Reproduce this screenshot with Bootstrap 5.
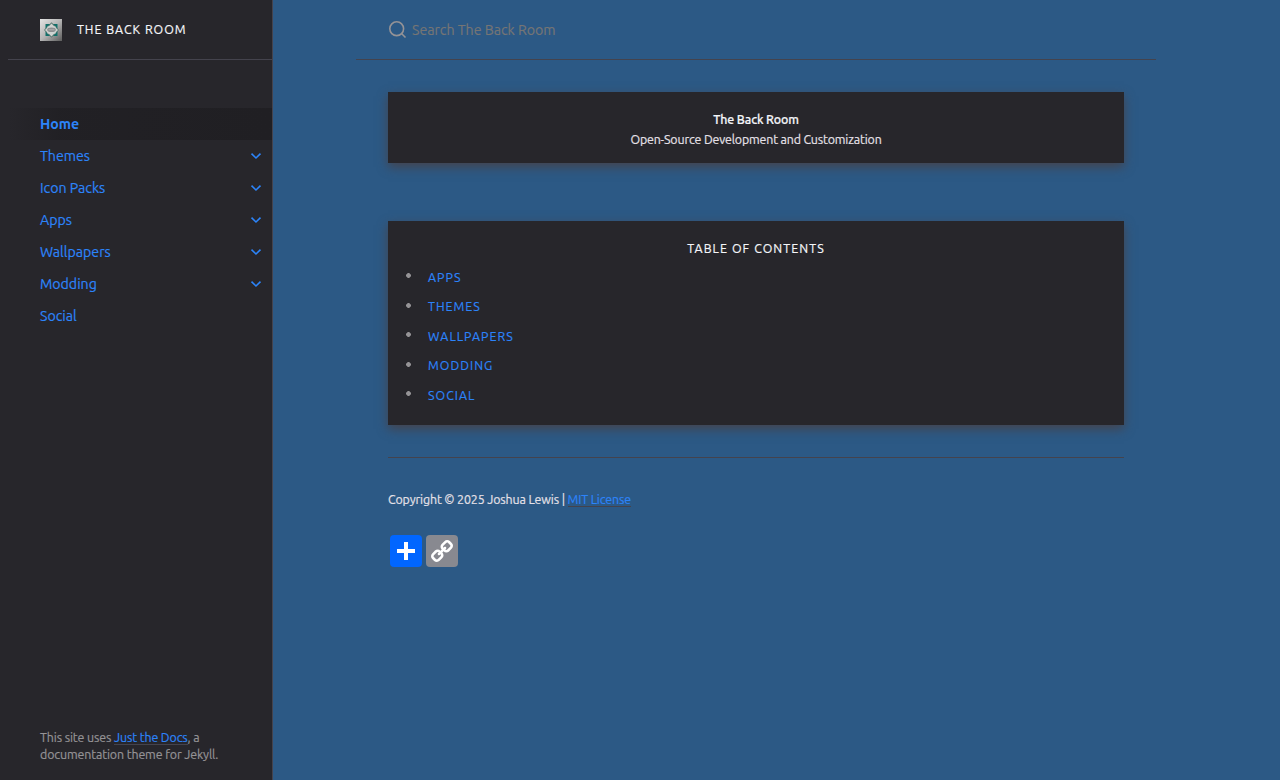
<!DOCTYPE html>
<html lang="en">
<head>
<meta charset="utf-8">
<meta name="viewport" content="width=device-width, initial-scale=1">
<title>The Back Room</title>
<link href="https://cdn.jsdelivr.net/npm/bootstrap@5.3.0/dist/css/bootstrap.min.css" rel="stylesheet">
<style>
  body { background: #2c5985; color: #e6e1e8; font: 12.4px/17px Ubuntu, "Noto Sans", sans-serif; letter-spacing: -.13px; -webkit-text-stroke: .18px; }
  a { color: #2c84fa; text-decoration: none; }
  .side-bar { width: 273px; padding-left: 8px; background: #27262b; border-right: 1px solid #44434d; }
  .site-header, .search-bar { height: 60px; border-bottom: 1px solid #44434d; padding-left: 32px; }
  .site-title { color: #f5f6fa; letter-spacing: .98px; margin-left: 15px; }
  .side-nav { padding-top: 48px; font-size: 14.2px; line-height: 32px; letter-spacing: -.02px; }
  .side-nav a { height: 32px; padding: 0 10px 0 32px; }
  .side-nav a.current { font-weight: 600; -webkit-text-stroke: 0; background: linear-gradient(-90deg, #201f23 0%, rgba(32,31,35,.8) 80%, rgba(32,31,35,0) 100%); }
  .side-foot { padding: 0 32px 17px; color: #959396; letter-spacing: -.11px; }
  .ruled { border-bottom: 1px solid #44434d; }
  .main-col { width: 800px; margin-left: 83px; }
  .search-label { font-size: 14.2px; letter-spacing: -.02px; line-height: 20px; color: #757575; margin-left: 5px; }
  .panel { background: #27262b; box-shadow: 0 4px 10px #44434d; }
  .intro { height: 71px; padding-top: 17px; line-height: 20px; }
  .intro strong { font-weight: 500; color: #f5f6fa; }
  .tagline { letter-spacing: -.15px; }
  .toc { margin-top: 58px; height: 204px; padding-top: 19px; }
  .toc-title { color: #f5f6fa; letter-spacing: 1.08px; line-height: 17px; }
  .toc ul { margin-top: 5.6px; letter-spacing: 1.03px; }
  .toc li { height: 29.5px; line-height: 29px; }
  .dot { width: 5px; height: 5px; background: radial-gradient(circle, #959396 2px, transparent 2.7px); margin: 0 17px 3.4px 18px; }
  .main-foot { margin-top: 32px; border-top: 1px solid #44434d; padding-top: 33px; }
  .share { padding: 27px 0 0 2px; gap: 4px; }
</style>
</head>
<body>
<div class="d-flex vh-100 overflow-hidden">
  <aside class="side-bar d-flex flex-column flex-shrink-0">
    <header class="site-header d-flex align-items-center flex-shrink-0">
      <svg width="22" height="22" viewBox="0 0 22 22" aria-hidden="true">
        <defs><linearGradient id="plate" x1="0" y1="0" x2="1" y2="1"><stop offset="0" stop-color="#e4e4e4"/><stop offset=".5" stop-color="#b5b5b5"/><stop offset="1" stop-color="#5c5c5c"/></linearGradient></defs>
        <rect width="22" height="22" fill="url(#plate)"/>
        <path d="M5.500 5h12v12h-12z" fill="#12706b"/>
        <path d="M11.500 3.200L19 11l-7.500 7.800L4 11z" fill="#5c7a72"/>
        <path d="M11.500 4.500l2.300 2.500 1.700.500.500 1.500 2 2-2 2-.500 1.500-1.700.500-2.300 2.500-2.300-2.500-1.700-.500-.500-1.500-2-2 2-2 .500-1.500 1.700-.500z" fill="#d0d3d1"/>
        <ellipse cx="11.500" cy="10.800" rx="4.300" ry="2.300" fill="#8c8e90"/><path d="M8.500 10.800h6" stroke="#b9b9b9" stroke-width=".8"/>
      </svg>
      <span class="site-title">THE BACK ROOM</span>
    </header>
    <nav class="side-nav flex-grow-1">
      <a href="#" class="current d-flex"><span>Home</span></a>
      <a href="#" class="d-flex align-items-center justify-content-between"><span>Themes</span><svg class="chev" width="12" height="8" viewBox="0 0 12 8"><path d="M1.500 1.700L6 6l4.500-4.300" fill="none" stroke="#2c84fa" stroke-width="1.600"/></svg></a>
      <a href="#" class="d-flex align-items-center justify-content-between"><span>Icon Packs</span><svg class="chev" width="12" height="8" viewBox="0 0 12 8"><path d="M1.500 1.700L6 6l4.500-4.300" fill="none" stroke="#2c84fa" stroke-width="1.600"/></svg></a>
      <a href="#" class="d-flex align-items-center justify-content-between"><span>Apps</span><svg class="chev" width="12" height="8" viewBox="0 0 12 8"><path d="M1.500 1.700L6 6l4.500-4.300" fill="none" stroke="#2c84fa" stroke-width="1.600"/></svg></a>
      <a href="#" class="d-flex align-items-center justify-content-between"><span>Wallpapers</span><svg class="chev" width="12" height="8" viewBox="0 0 12 8"><path d="M1.500 1.700L6 6l4.500-4.300" fill="none" stroke="#2c84fa" stroke-width="1.600"/></svg></a>
      <a href="#" class="d-flex align-items-center justify-content-between"><span>Modding</span><svg class="chev" width="12" height="8" viewBox="0 0 12 8"><path d="M1.500 1.700L6 6l4.500-4.300" fill="none" stroke="#2c84fa" stroke-width="1.600"/></svg></a>
      <a href="#" class="d-flex"><span>Social</span></a>
    </nav>
    <footer class="side-foot text-nowrap">This site uses <a href="#" class="ruled">Just the Docs</a>, a<br>documentation theme for Jekyll.</footer>
  </aside>
  <div class="main-col">
    <div class="search-bar d-flex align-items-center">
      <svg width="19" height="19" viewBox="0 0 19 19" fill="none" stroke="#959396" stroke-width="1.600"><circle cx="8.700" cy="8.700" r="6.900"/><path d="M13.500 13.500l4 4"/></svg>
      <span class="search-label">Search The Back Room</span>
    </div>
    <main class="px-4 mx-2 pt-4 mt-2">
      <section class="panel intro text-center"><strong class="d-block">The Back Room</strong><span class="tagline">Open-Source Development and Customization</span></section>
      <section class="panel toc">
        <div class="toc-title text-center">TABLE OF CONTENTS</div>
        <ul class="list-unstyled mb-0">
          <li class="d-flex align-items-center"><i class="dot"></i><a href="#">APPS</a></li>
          <li class="d-flex align-items-center"><i class="dot"></i><a href="#">THEMES</a></li>
          <li class="d-flex align-items-center"><i class="dot"></i><a href="#">WALLPAPERS</a></li>
          <li class="d-flex align-items-center"><i class="dot"></i><a href="#">MODDING</a></li>
          <li class="d-flex align-items-center"><i class="dot"></i><a href="#">SOCIAL</a></li>
        </ul>
      </section>
      <footer class="main-foot">
        <div class="copy">Copyright © 2025 Joshua Lewis | <a href="#" class="ruled">MIT License</a></div>
        <div class="share d-flex">
          <svg width="32" height="32" viewBox="0 0 32 32"><rect width="32" height="32" rx="4" fill="#0166ff"/><path d="M14 7h4v18h-4zM7 14h18v4H7z" fill="#fff"/></svg>
          <svg width="32" height="32" viewBox="0 0 32 32"><rect width="32" height="32" rx="4" fill="#888990"/><path fill="#fff" d="M24.412 21.177c0-.36-.126-.665-.377-.917l-2.804-2.804a1.235 1.235 0 0 0-.913-.378c-.377 0-.7.144-.97.430.026.028.11.110.255.250.144.140.240.236.290.290s.117.140.200.256c.087.117.146.232.177.344.030.112.046.236.046.370 0 .360-.126.666-.377.918a1.250 1.250 0 0 1-.918.377 1.400 1.400 0 0 1-.373-.047 1.062 1.062 0 0 1-.345-.175 2.268 2.268 0 0 1-.256-.200 6.815 6.815 0 0 1-.290-.290c-.140-.142-.223-.230-.250-.254-.297.280-.445.607-.445.984 0 .360.126.664.377.916l2.778 2.790c.243.243.548.364.917.364.360 0 .665-.118.917-.350l1.982-1.970c.252-.250.378-.550.378-.900zm-9.477-9.504c0-.360-.126-.665-.377-.917l-2.777-2.790a1.235 1.235 0 0 0-.913-.378c-.350 0-.656.120-.917.364L7.967 9.920c-.254.252-.380.553-.380.903 0 .360.126.665.380.917l2.802 2.804c.242.243.547.364.916.364.377 0 .700-.140.970-.418-.026-.027-.110-.110-.255-.250s-.240-.235-.290-.290a2.675 2.675 0 0 1-.200-.255 1.052 1.052 0 0 1-.176-.344 1.396 1.396 0 0 1-.047-.370c0-.360.126-.662.377-.914.252-.252.557-.377.917-.377.136 0 .260.015.370.046.114.030.230.090.346.175.117.085.202.153.256.200.054.050.150.148.290.290.140.146.222.230.250.258.294-.278.442-.606.442-.983zM27 21.177c0 1.078-.382 1.990-1.146 2.736l-1.982 1.968c-.745.750-1.658 1.120-2.736 1.120-1.087 0-2.004-.380-2.750-1.143l-2.777-2.790c-.750-.747-1.120-1.660-1.120-2.737 0-1.106.392-2.046 1.183-2.818l-1.186-1.185c-.774.790-1.708 1.186-2.805 1.186-1.078 0-1.995-.376-2.750-1.130l-2.803-2.810C5.377 12.820 5 11.903 5 10.826c0-1.080.382-1.993 1.146-2.738L8.128 6.120C8.873 5.372 9.785 5 10.864 5c1.087 0 2.004.382 2.750 1.146l2.777 2.790c.750.747 1.120 1.660 1.120 2.737 0 1.105-.392 2.045-1.183 2.817l1.186 1.186c.774-.790 1.708-1.186 2.805-1.186 1.078 0 1.995.377 2.750 1.132l2.804 2.804c.754.755 1.130 1.672 1.130 2.750z" transform="matrix(-1 0 0 1 32 0)"/></svg>
        </div>
      </footer>
    </main>
  </div>
</div>
<script src="https://cdn.jsdelivr.net/npm/bootstrap@5.3.0/dist/js/bootstrap.bundle.min.js"></script>
</body>
</html>
